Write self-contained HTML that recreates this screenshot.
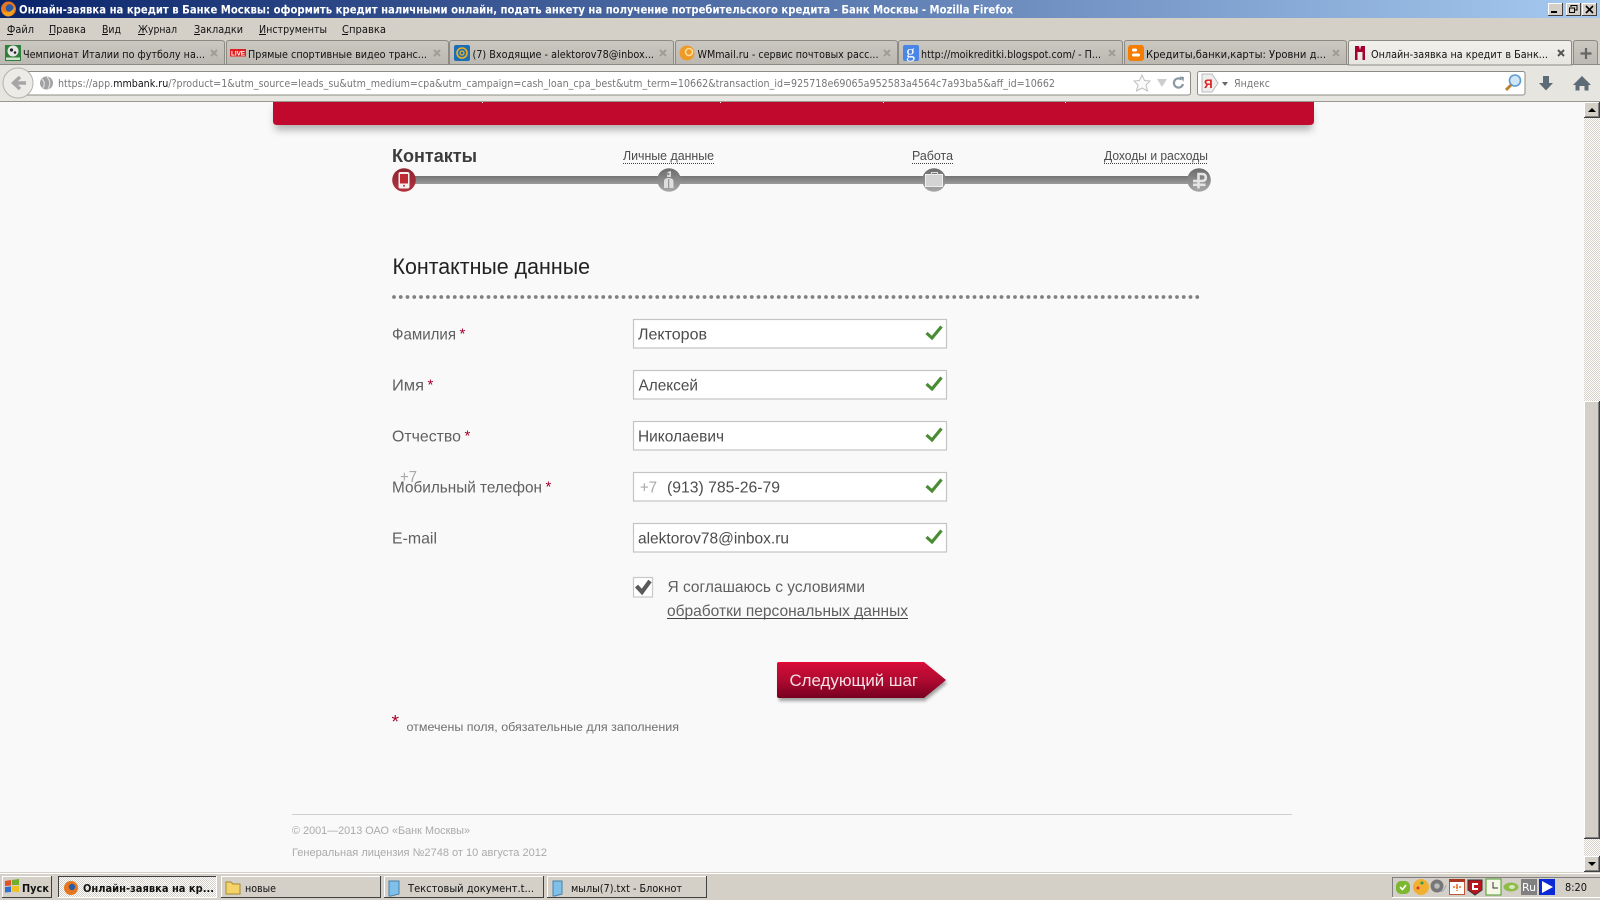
<!DOCTYPE html>
<html lang="ru"><head><meta charset="utf-8"><title>Онлайн-заявка на кредит</title>
<style>
html,body{margin:0;padding:0;background:#f9f9f9;overflow:hidden}
svg{display:block}
.c{font-family:"DejaVu Sans","Liberation Sans",sans-serif;font-size:11px;fill:#111}
.l{font-family:"Liberation Sans",sans-serif;font-size:16px;fill:#606060}
.v{font-family:"Liberation Sans",sans-serif;font-size:16px;fill:#4c4c4c}
.r{font-family:"Liberation Sans",sans-serif;font-size:15px;fill:#a5002d}
.s{font-family:"Liberation Sans",sans-serif;font-size:12.5px;fill:#4c4c4c}
.f{font-family:"Liberation Sans",sans-serif;font-size:11px;fill:#aaa}
</style></head><body>
<svg width="1600" height="900" viewBox="0 0 1600 900" xmlns="http://www.w3.org/2000/svg">
<defs>
<linearGradient id="tb" x1="0" x2="1" y1="0" y2="0"><stop offset="0" stop-color="#0a246a"/><stop offset="1" stop-color="#a6caf0"/></linearGradient>
<linearGradient id="tab" x1="0" x2="0" y1="0" y2="1"><stop offset="0" stop-color="#cbc8c1"/><stop offset="1" stop-color="#bbb8b1"/></linearGradient>
<linearGradient id="atab" x1="0" x2="0" y1="0" y2="1"><stop offset="0" stop-color="#f2f1ee"/><stop offset="1" stop-color="#e6e5e0"/></linearGradient>
<linearGradient id="bar" x1="0" x2="0" y1="0" y2="1"><stop offset="0" stop-color="#747474"/><stop offset="1" stop-color="#9a9a9a"/></linearGradient>
<linearGradient id="cg" x1="0" x2="0" y1="0" y2="1"><stop offset="0" stop-color="#6c6c6c"/><stop offset="1" stop-color="#a8a8a8"/></linearGradient>
<linearGradient id="cr" x1="0" x2="0" y1="0" y2="1"><stop offset="0" stop-color="#8e2530"/><stop offset="1" stop-color="#b3323c"/></linearGradient>
<linearGradient id="btn" x1="0" x2="0" y1="0" y2="1"><stop offset="0" stop-color="#ee0534"/><stop offset=".07" stop-color="#d00c38"/><stop offset=".5" stop-color="#b00a30"/><stop offset="1" stop-color="#760020"/></linearGradient>
<pattern id="dth" width="2" height="2" patternUnits="userSpaceOnUse"><rect width="2" height="2" fill="#fff"/><rect width="1" height="1" fill="#d4d0c8"/><rect x="1" y="1" width="1" height="1" fill="#d4d0c8"/></pattern>
<filter id="sh" x="-5%" y="-50%" width="110%" height="200%"><feGaussianBlur stdDeviation="4"/></filter>
<filter id="sh2" x="-10%" y="-20%" width="120%" height="140%"><feGaussianBlur stdDeviation="1.5"/></filter>
<path id="chk" d="M926.5,333 L932,338 L941.5,326.5" fill="none" stroke="#4a8c34" stroke-width="3.2"/>
</defs>

<!-- page -->
<rect width="1600" height="900" fill="#f9f9f9"/>

<!-- banner -->
<rect x="275" y="109" width="1037" height="21" fill="#777" opacity=".55" filter="url(#sh)"/>
<path d="M273,100 H1314 V121 Q1314,125 1310,125 H277 Q273,125 273,121 Z" fill="#c0092c"/>
<g fill="#fff"><rect x="482" y="102" width="1" height="1"/><rect x="720" y="102" width="1" height="1"/><rect x="883" y="102" width="1" height="1"/><rect x="1065" y="102" width="1" height="1"/></g>

<!-- steps -->
<text x="392" y="162" font-family="Liberation Sans" font-size="18.5" font-weight="bold" fill="#3c3c3c" textLength="85" lengthAdjust="spacingAndGlyphs">Контакты</text>
<text class="s" x="623" y="160" textLength="91" lengthAdjust="spacingAndGlyphs">Личные данные</text>
<text class="s" x="912" y="160" textLength="41" lengthAdjust="spacingAndGlyphs">Работа</text>
<text class="s" x="1104" y="160" textLength="104" lengthAdjust="spacingAndGlyphs">Доходы и расходы</text>
<g stroke="#444" stroke-width="1" stroke-dasharray="1 1" fill="none"><path d="M623,163.5H714"/><path d="M912,163.5H953"/><path d="M1104,163.5H1208"/></g>
<rect x="404" y="176" width="795" height="8" fill="url(#bar)"/>
<circle cx="404" cy="180" r="11.8" fill="url(#cr)"/>
<rect x="398.5" y="172" width="11" height="16.5" rx="2" fill="#f4f0f0"/><rect x="400" y="174" width="8" height="9.5" fill="#c02a35"/><circle cx="404" cy="185.8" r="1" fill="#b3323c"/>
<circle cx="669" cy="180" r="11.8" fill="url(#cg)"/>
<path d="M667.5,172 L671,171 V177 H667 Z" fill="#d8d8d8"/><circle cx="668.5" cy="174" r="1" fill="#777"/>
<path d="M664,188 V181.5 Q664,178 668.5,178 Q673.5,178 673.5,181.5 V188 Z" fill="#dedede"/><path d="M668.7,179V188" stroke="#888" stroke-width="1"/>
<circle cx="934" cy="180" r="11.8" fill="url(#cg)"/>
<rect x="925.5" y="174.5" width="17" height="12" fill="#d4d4d4" stroke="#eee"/><path d="M931.5,174.5V172.5H937.5V174.5" fill="none" stroke="#ddd"/>
<circle cx="1199" cy="180" r="11.8" fill="url(#cg)"/>
<path d="M1198.5,188.5 V174 H1202 Q1205.8,174 1205.8,177.5 Q1205.8,181 1202,181 H1193 M1193,184.8 H1205.5" fill="none" stroke="#e4e4e4" stroke-width="2.6"/>

<!-- heading -->
<text x="392.5" y="274" font-family="Liberation Sans" font-size="22" fill="#222" textLength="197.5" lengthAdjust="spacingAndGlyphs">Контактные данные</text>
<path d="M394,297 H1203" stroke="#808080" stroke-width="3.8" stroke-linecap="round" stroke-dasharray="0 6.75" fill="none"/>

<!-- form -->
<g fill="#fff" stroke="#c4c4c4" stroke-width="1.2">
<rect x="633.5" y="319.5" width="313" height="28.5"/><rect x="633.5" y="370.5" width="313" height="28.5"/><rect x="633.5" y="421.5" width="313" height="28.5"/><rect x="633.5" y="472.5" width="313" height="28.5"/><rect x="633.5" y="523.5" width="313" height="28.5"/>
</g>
<use href="#chk"/><use href="#chk" y="51"/><use href="#chk" y="102"/><use href="#chk" y="153"/><use href="#chk" y="204"/>

<text class="l" x="392" y="339.5" textLength="64" lengthAdjust="spacingAndGlyphs">Фамилия</text><text class="r" x="459.5" y="338.5">*</text>
<text class="l" x="392" y="390.5" textLength="32" lengthAdjust="spacingAndGlyphs">Имя</text><text class="r" x="427.5" y="389.5">*</text>
<text class="l" x="392" y="441.5" textLength="69" lengthAdjust="spacingAndGlyphs">Отчество</text><text class="r" x="464.5" y="440.5">*</text>
<text class="l" x="392" y="492.5" textLength="150" lengthAdjust="spacingAndGlyphs">Мобильный телефон</text><text class="r" x="545.5" y="491.5">*</text>
<text class="l" x="392" y="543.5" textLength="45" lengthAdjust="spacingAndGlyphs">E-mail</text>
<text class="l" x="400" y="482" textLength="17" lengthAdjust="spacingAndGlyphs" style="fill:#a8a8a8">+7</text>

<text class="v" x="638" y="339.5" textLength="69" lengthAdjust="spacingAndGlyphs">Лекторов</text>
<text class="v" x="638.5" y="390.5" textLength="59.5" lengthAdjust="spacingAndGlyphs">Алексей</text>
<text class="v" x="638" y="441.5" textLength="86" lengthAdjust="spacingAndGlyphs">Николаевич</text>
<text class="v" x="640" y="492.5" textLength="17" lengthAdjust="spacingAndGlyphs" style="fill:#a8a8a8">+7</text>
<text class="v" x="667" y="492.5" textLength="113" lengthAdjust="spacingAndGlyphs">(913) 785-26-79</text>
<text class="v" x="638" y="543.5" textLength="151" lengthAdjust="spacingAndGlyphs">alektorov78@inbox.ru</text>

<rect x="633.5" y="577.5" width="19" height="19.5" fill="#fff" stroke="#c8c8c8" stroke-width="1.2"/>
<path d="M636.5,586 L642,592 L650,581" fill="none" stroke="#5a5a5a" stroke-width="4.2"/>
<text class="l" x="667.5" y="592" textLength="197.5" lengthAdjust="spacingAndGlyphs">Я соглашаюсь с условиями</text>
<text class="l" x="667" y="616" textLength="241" lengthAdjust="spacingAndGlyphs">обработки персональных данных</text>
<path d="M667,618.5H908" stroke="#444" stroke-width="1"/>

<!-- button -->
<path d="M779,665 H925 L947,683 L925,701 H779 Z" fill="#555" opacity=".55" filter="url(#sh2)"/>
<path d="M779,662 H924 L946,680 L924,698 H779 Q777,698 777,696 V664 Q777,662 779,662 Z" fill="url(#btn)"/>
<text x="789.5" y="686" font-family="Liberation Sans" font-size="17" fill="#f6dfe4" textLength="128.5" lengthAdjust="spacingAndGlyphs">Следующий шаг</text>

<text x="391.5" y="728" font-family="Liberation Sans" font-size="18" fill="#a5002d" textLength="7.5" lengthAdjust="spacingAndGlyphs">*</text>
<text x="406.5" y="731" font-family="Liberation Sans" font-size="12" fill="#707070" textLength="272.5" lengthAdjust="spacingAndGlyphs">отмечены поля, обязательные для заполнения</text>

<!-- footer -->
<rect x="292" y="814" width="1000" height="1" fill="#cfcfcf"/>
<text class="f" x="292" y="834" textLength="178" lengthAdjust="spacingAndGlyphs">© 2001—2013 ОАО «Банк Москвы»</text>
<text class="f" x="292" y="856" textLength="255" lengthAdjust="spacingAndGlyphs">Генеральная лицензия №2748 от 10 августа 2012</text>

<!-- page scrollbar -->
<rect x="1584" y="101" width="16" height="771" fill="url(#dth)"/>
<g>
<rect x="1584" y="102" width="16" height="16" fill="#d4d0c8"/><path d="M1584.5,117.5V102.5H1599" stroke="#fff" fill="none"/><path d="M1584,117.5H1599.5V102" stroke="#404040" fill="none"/><path d="M1585,116.5H1598.5V103" stroke="#808080" fill="none"/><path d="M1588,112H1596L1592,108Z" fill="#000"/>
<rect x="1584" y="401" width="16" height="438" fill="#d4d0c8"/><path d="M1584.5,838.5V401.5H1599" stroke="#fff" fill="none"/><path d="M1584,838.5H1599.5V401" stroke="#404040" fill="none"/><path d="M1585,837.5H1598.5V402" stroke="#808080" fill="none"/>
<rect x="1584" y="856" width="16" height="16" fill="#d4d0c8"/><path d="M1584.5,871.5V856.5H1599" stroke="#fff" fill="none"/><path d="M1584,871.5H1599.5V856" stroke="#404040" fill="none"/><path d="M1585,870.5H1598.5V857" stroke="#808080" fill="none"/><path d="M1588,862H1596L1592,866Z" fill="#000"/>
</g>

<!-- title bar -->
<rect width="1600" height="18" fill="url(#tb)"/>
<circle cx="8.5" cy="9" r="7.5" fill="#e8761c"/><circle cx="9.5" cy="8" r="3.8" fill="#2a5aa8"/><path d="M2,10 Q8,16 15,7 Q14,16 8,16.5 Q3,16 2,10Z" fill="#f2a21f"/>
<text x="19" y="13.5" font-family="DejaVu Sans" font-size="11.5" font-weight="bold" fill="#fff" textLength="994" lengthAdjust="spacingAndGlyphs">Онлайн-заявка на кредит в Банке Москвы: оформить кредит наличными онлайн, подать анкету на получение потребительского кредита - Банк Москвы - Mozilla Firefox</text>
<g>
<rect x="1548" y="3" width="15" height="13" fill="#d4d0c8"/><path d="M1548.5,15.5V3.5H1563" stroke="#fff" fill="none"/><path d="M1548,15.5H1562.5V3" stroke="#404040" fill="none"/><rect x="1551" y="11" width="6" height="2" fill="#000"/>
<rect x="1566" y="3" width="15" height="13" fill="#d4d0c8"/><path d="M1566.5,15.5V3.5H1581" stroke="#fff" fill="none"/><path d="M1566,15.5H1580.5V3" stroke="#404040" fill="none"/><path d="M1571,7V5.5H1577V10H1575M1569.5,8H1574.5V12.5H1569.5Z" fill="none" stroke="#000"/>
<rect x="1582" y="3" width="15" height="13" fill="#d4d0c8"/><path d="M1582.5,15.5V3.5H1597" stroke="#fff" fill="none"/><path d="M1582,15.5H1596.5V3" stroke="#404040" fill="none"/><path d="M1586,6L1593,13M1593,6L1586,13" stroke="#000" stroke-width="1.6"/>
</g>

<!-- menu bar -->
<rect y="18" width="1600" height="46" fill="#d4d0c8"/>
<g class="c">
<text class="c" x="7" y="33" textLength="27" lengthAdjust="spacingAndGlyphs">Файл</text>
<text class="c" x="49" y="33" textLength="37" lengthAdjust="spacingAndGlyphs">Правка</text>
<text class="c" x="102" y="33" textLength="19" lengthAdjust="spacingAndGlyphs">Вид</text>
<text class="c" x="138" y="33" textLength="39" lengthAdjust="spacingAndGlyphs">Журнал</text>
<text class="c" x="194" y="33" textLength="49" lengthAdjust="spacingAndGlyphs">Закладки</text>
<text class="c" x="259" y="33" textLength="68" lengthAdjust="spacingAndGlyphs">Инструменты</text>
<text class="c" x="342" y="33" textLength="44" lengthAdjust="spacingAndGlyphs">Справка</text>
</g>
<g stroke="#111" stroke-width="1"><path d="M7,34.5H13M49,34.5H55M102,34.5H108M138,34.5H145M194,34.5H200M259,34.5H266M342,34.5H348"/></g>

<!-- tabs -->
<rect y="64" width="1600" height="38" fill="#e6e5e0"/>
<rect y="101" width="1600" height="1" fill="#9a9890"/>
<g fill="url(#tab)" stroke="#8d8a84" stroke-width="1">
<path d="M-1,64.5V43Q-1,40.5 2,40.5H221Q224.5,40.5 224.5,43V64.5Z"/>
<path d="M226.5,64.5V43Q226.5,40.5 229,40.5H445Q448.5,40.5 448.5,43V64.5Z"/>
<path d="M449.5,64.5V43Q449.5,40.5 452,40.5H670Q673.5,40.5 673.5,43V64.5Z"/>
<path d="M675.5,64.5V43Q675.5,40.5 678,40.5H894Q897.5,40.5 897.5,43V64.5Z"/>
<path d="M898.5,64.5V43Q898.5,40.5 901,40.5H1119Q1122.5,40.5 1122.5,43V64.5Z"/>
<path d="M1124.5,64.5V43Q1124.5,40.5 1127,40.5H1343Q1346.5,40.5 1346.5,43V64.5Z"/>
<path d="M1573.5,64.5V43Q1573.5,40.5 1576,40.5H1594Q1597.5,40.5 1597.5,43V64.5Z"/>
</g>
<path d="M1348.5,65V43Q1348.5,40.5 1351,40.5H1569Q1571.5,40.5 1571.5,43V65Z" fill="url(#atab)" stroke="#8d8a84"/>
<path d="M0,64.5H1348M1572,64.5H1600" stroke="#8d8a84"/>

<text class="c" x="23" y="58" textLength="182" lengthAdjust="spacingAndGlyphs">Чемпионат Италии по футболу на...</text>
<text class="c" x="248" y="58" textLength="179" lengthAdjust="spacingAndGlyphs">Прямые спортивные видео транс...</text>
<text class="c" x="472.5" y="58" textLength="181.5" lengthAdjust="spacingAndGlyphs">(7) Входящие - alektorov78@inbox...</text>
<text class="c" x="697.5" y="58" textLength="181" lengthAdjust="spacingAndGlyphs">WMmail.ru - сервис почтовых расс...</text>
<text class="c" x="921" y="58" textLength="180" lengthAdjust="spacingAndGlyphs">http://moikreditki.blogspot.com/ - П...</text>
<text class="c" x="1146" y="58" textLength="180" lengthAdjust="spacingAndGlyphs">Кредиты,банки,карты: Уровни д...</text>
<text class="c" x="1371" y="58" textLength="177" lengthAdjust="spacingAndGlyphs">Онлайн-заявка на кредит в Банк...</text>

<!-- tab close -->
<g stroke="#a09d96" stroke-width="2">
<path d="M211,50L217,56M217,50L211,56"/><path d="M434,50L440,56M440,50L434,56"/><path d="M660,50L666,56M666,50L660,56"/><path d="M884,50L890,56M890,50L884,56"/><path d="M1109,50L1115,56M1115,50L1109,56"/><path d="M1333,50L1339,56M1339,50L1333,56"/>
</g>
<path d="M1558,50L1564,56M1564,50L1558,56" stroke="#555" stroke-width="2"/>
<path d="M1586,48V59M1580.5,53.5H1591.5" stroke="#666" stroke-width="2.2"/>

<!-- favicons -->
<rect x="5" y="45" width="16" height="16" fill="#2f7f3b"/><circle cx="13" cy="51" r="5.5" fill="#e8e8e8"/><circle cx="11.5" cy="50" r="1.6" fill="#222"/><circle cx="15" cy="52.5" r="1.3" fill="#222"/><rect x="6" y="57.5" width="14" height="2.5" fill="#cfe3cf"/>
<rect x="230" y="49" width="16" height="7.5" fill="#e02020"/><text x="231" y="55.5" font-family="Liberation Sans" font-size="6.5" font-weight="bold" fill="#fff" textLength="14" lengthAdjust="spacingAndGlyphs">LIVE</text>
<rect x="454" y="45" width="16" height="16" rx="2" fill="#1d6fb5"/><circle cx="462" cy="53" r="5" fill="none" stroke="#f0b020" stroke-width="1.6"/><circle cx="462" cy="53" r="2" fill="none" stroke="#f0b020" stroke-width="1.2"/>
<circle cx="687" cy="53" r="7.5" fill="#ee9a28"/><circle cx="689" cy="52" r="3.5" fill="none" stroke="#fbdc98" stroke-width="1.6"/>
<rect x="903" y="45" width="16" height="16" rx="2" fill="#4a86e8"/><text x="906" y="57.5" font-family="Liberation Serif" font-size="18" fill="#fff" textLength="9" lengthAdjust="spacingAndGlyphs">g</text>
<rect x="1128" y="45" width="16" height="16" rx="3" fill="#f57d00"/><rect x="1132" y="48.5" width="5" height="3" rx="1.5" fill="#fff"/><rect x="1132" y="53.5" width="8" height="3" rx="1.5" fill="#fff"/>
<path d="M1355,46H1359L1360,50L1361,46H1365V60H1362.5V52H1357.5V60H1355Z" fill="#a5002d"/>

<!-- url bar -->
<rect x="20.5" y="71.5" width="1170" height="23.5" rx="2" fill="#fff" stroke="#8e8c86"/>
<circle cx="18" cy="83" r="15" fill="#ecebe7" stroke="#b4b2ac"/>
<path d="M26,83H16M20,77L13.5,83L20,89" fill="none" stroke="#a6a6a6" stroke-width="3.4"/>
<circle cx="46.5" cy="83" r="6.5" fill="#a0a0a0"/><path d="M42,79Q46,83 43,88M47,77Q52,82 48,89" stroke="#d8d8d8" stroke-width="1.3" fill="none"/>
<text x="58" y="87" font-family="DejaVu Sans" font-size="11" fill="#777" textLength="997" lengthAdjust="spacingAndGlyphs">https://app.<tspan fill="#111">mmbank.ru</tspan>/?product=1&amp;utm_source=leads_su&amp;utm_medium=cpa&amp;utm_campaign=cash_loan_cpa_best&amp;utm_term=10662&amp;transaction_id=925718e69065a952583a4564c7a93ba5&amp;aff_id=10662</text>
<path d="M1142,75L1144.5,80.5L1150,81L1146,85L1147.5,91L1142,88L1136.5,91L1138,85L1134,81L1139.5,80.5Z" fill="#fafafa" stroke="#c0c0c0"/>
<path d="M1157,79H1167L1162,87Z" fill="#cccccc"/>
<path d="M1181.5,79.5A4.6,4.6 0 1 0 1183,84" fill="none" stroke="#8a98a2" stroke-width="2.2"/><path d="M1179.5,76.5L1184,77L1183.5,81.8Z" fill="#8a98a2"/>

<!-- search bar -->
<rect x="1197.5" y="71.5" width="327.5" height="23.5" rx="2" fill="#fff" stroke="#8e8c86"/>
<path d="M1202,74H1212L1218,83L1212,92H1202Z" fill="#eee" stroke="#bbb"/><text x="1204" y="88" font-family="Liberation Sans" font-size="12" font-weight="bold" fill="#d22">Я</text>
<path d="M1222,82H1228L1225,86Z" fill="#666"/>
<text class="c" x="1234" y="87" textLength="36" lengthAdjust="spacingAndGlyphs" style="fill:#777">Яндекс</text>
<circle cx="1515" cy="80.5" r="5.5" fill="#cfe6f7" stroke="#5c9ad0" stroke-width="1.6"/><path d="M1511,85L1506,90" stroke="#b9842e" stroke-width="3"/>

<!-- nav right -->
<path d="M1543,76H1549V83H1553L1546,90.5L1539,83H1543Z" fill="#5d6b77"/>
<path d="M1582,76L1591,85H1588.5V90.5H1584.5V86H1579.5V90.5H1575.5V85H1573Z" fill="#5d6b77"/>

<!-- taskbar -->
<rect y="872" width="1600" height="28" fill="#d4d0c8"/>
<rect y="873" width="1600" height="1" fill="#fff"/>
<g>
<rect x="2" y="876" width="50" height="22" fill="#d4d0c8"/><path d="M2.5,897.5V876.5H52" stroke="#fff" fill="none"/><path d="M2,897.5H51.5V876" stroke="#404040" fill="none"/>
<path d="M5,881L11,880V885.5L5,886Z" fill="#e2522a"/><path d="M12,880L19,879V885H12Z" fill="#72ad2e"/><path d="M5,887L11,886.5V892L5,892.5Z" fill="#2e6fd0"/><path d="M12,886H19V892L12,891.5Z" fill="#f0c020"/>
<text class="c" x="22" y="892" font-weight="bold" textLength="27" lengthAdjust="spacingAndGlyphs">Пуск</text>

<rect x="58" y="876" width="159" height="22" fill="url(#dth)"/><path d="M58.5,898V876.5H217" stroke="#404040" fill="none"/><path d="M58,897.5H216.5V876" stroke="#fff" fill="none"/>
<circle cx="71" cy="888" r="7" fill="#e8761c"/><circle cx="72" cy="887" r="3.2" fill="#2a5aa8"/>
<text class="c" x="83" y="892" font-weight="bold" textLength="131" lengthAdjust="spacingAndGlyphs">Онлайн-заявка на кр...</text>

<rect x="221" y="876" width="160" height="22" fill="#d4d0c8"/><path d="M221.5,897.5V876.5H381" stroke="#fff" fill="none"/><path d="M221,897.5H380.5V876" stroke="#404040" fill="none"/>
<path d="M226,884V882H231L233,884H240V894H226Z" fill="#f5d36a" stroke="#a8892c"/>
<text class="c" x="245" y="892" textLength="31" lengthAdjust="spacingAndGlyphs">новые</text>

<rect x="384" y="876" width="160" height="22" fill="#d4d0c8"/><path d="M384.5,897.5V876.5H544" stroke="#fff" fill="none"/><path d="M384,897.5H543.5V876" stroke="#404040" fill="none"/>
<path d="M389,881H399V894L391,896H389Z" fill="#7ec0ea" stroke="#4a7fa8"/>
<text class="c" x="408" y="892" textLength="126" lengthAdjust="spacingAndGlyphs">Текстовый документ.t...</text>

<rect x="547" y="876" width="160" height="22" fill="#d4d0c8"/><path d="M547.5,897.5V876.5H707" stroke="#fff" fill="none"/><path d="M547,897.5H706.5V876" stroke="#404040" fill="none"/>
<path d="M553,881H562V894L555,896H553Z" fill="#7ec0ea" stroke="#4a7fa8"/>
<text class="c" x="571" y="892" textLength="111" lengthAdjust="spacingAndGlyphs">мылы(7).txt - Блокнот</text>
</g>

<!-- tray -->
<path d="M1392.5,897V877.5H1600" stroke="#808080" fill="none"/><path d="M1392,897.5H1600" stroke="#fff" fill="none"/>
<rect x="1396" y="881" width="14" height="13" rx="5" fill="#7cb82f"/><path d="M1400,887L1402.5,889.5L1406,885" stroke="#fff" stroke-width="1.6" fill="none"/>
<circle cx="1421" cy="887" r="8" fill="#f2b030"/><circle cx="1418" cy="888" r="1.5" fill="#d33"/><circle cx="1422" cy="883" r="1.5" fill="#1a9f60"/>
<circle cx="1437" cy="886" r="6.5" fill="#777"/><circle cx="1437" cy="886" r="2.8" fill="#bbb"/><path d="M1441,892Q1445,890 1446,885" stroke="#9aa6d0" fill="none"/>
<rect x="1449.5" y="879.5" width="15" height="15" fill="#fff" stroke="#c0583a"/><rect x="1449" y="879" width="16" height="3" fill="#a83820"/><path d="M1453,887H1461M1457,884V891" stroke="#e8702a" stroke-width="1.6" stroke-dasharray="2 1"/>
<path d="M1468,880H1482V890L1475,895L1468,890Z" fill="#b8161c" stroke="#333"/><path d="M1478,884H1473V889H1478" fill="none" stroke="#fff" stroke-width="2"/>
<rect x="1486" y="879" width="15" height="16" fill="#f4f8e6" stroke="#4e9a28"/><path d="M1493,882V888H1498" stroke="#333" fill="none"/>
<ellipse cx="1511" cy="887" rx="7.5" ry="4.5" fill="#8ebc4a"/><ellipse cx="1512" cy="887" rx="3" ry="2" fill="#d8e8b8"/>
<rect x="1521" y="879" width="16" height="16" fill="#808080"/><text x="1522" y="891" font-family="DejaVu Sans" font-size="11" fill="#fff" textLength="14" lengthAdjust="spacingAndGlyphs">Ru</text>
<rect x="1539" y="879" width="16" height="16" fill="#0a2ad8"/><path d="M1542,881L1553,887L1542,893Z" fill="#fff"/>
<text class="c" x="1565" y="891" font-size="12" textLength="22" lengthAdjust="spacingAndGlyphs">8:20</text>
</svg>
</body></html>
